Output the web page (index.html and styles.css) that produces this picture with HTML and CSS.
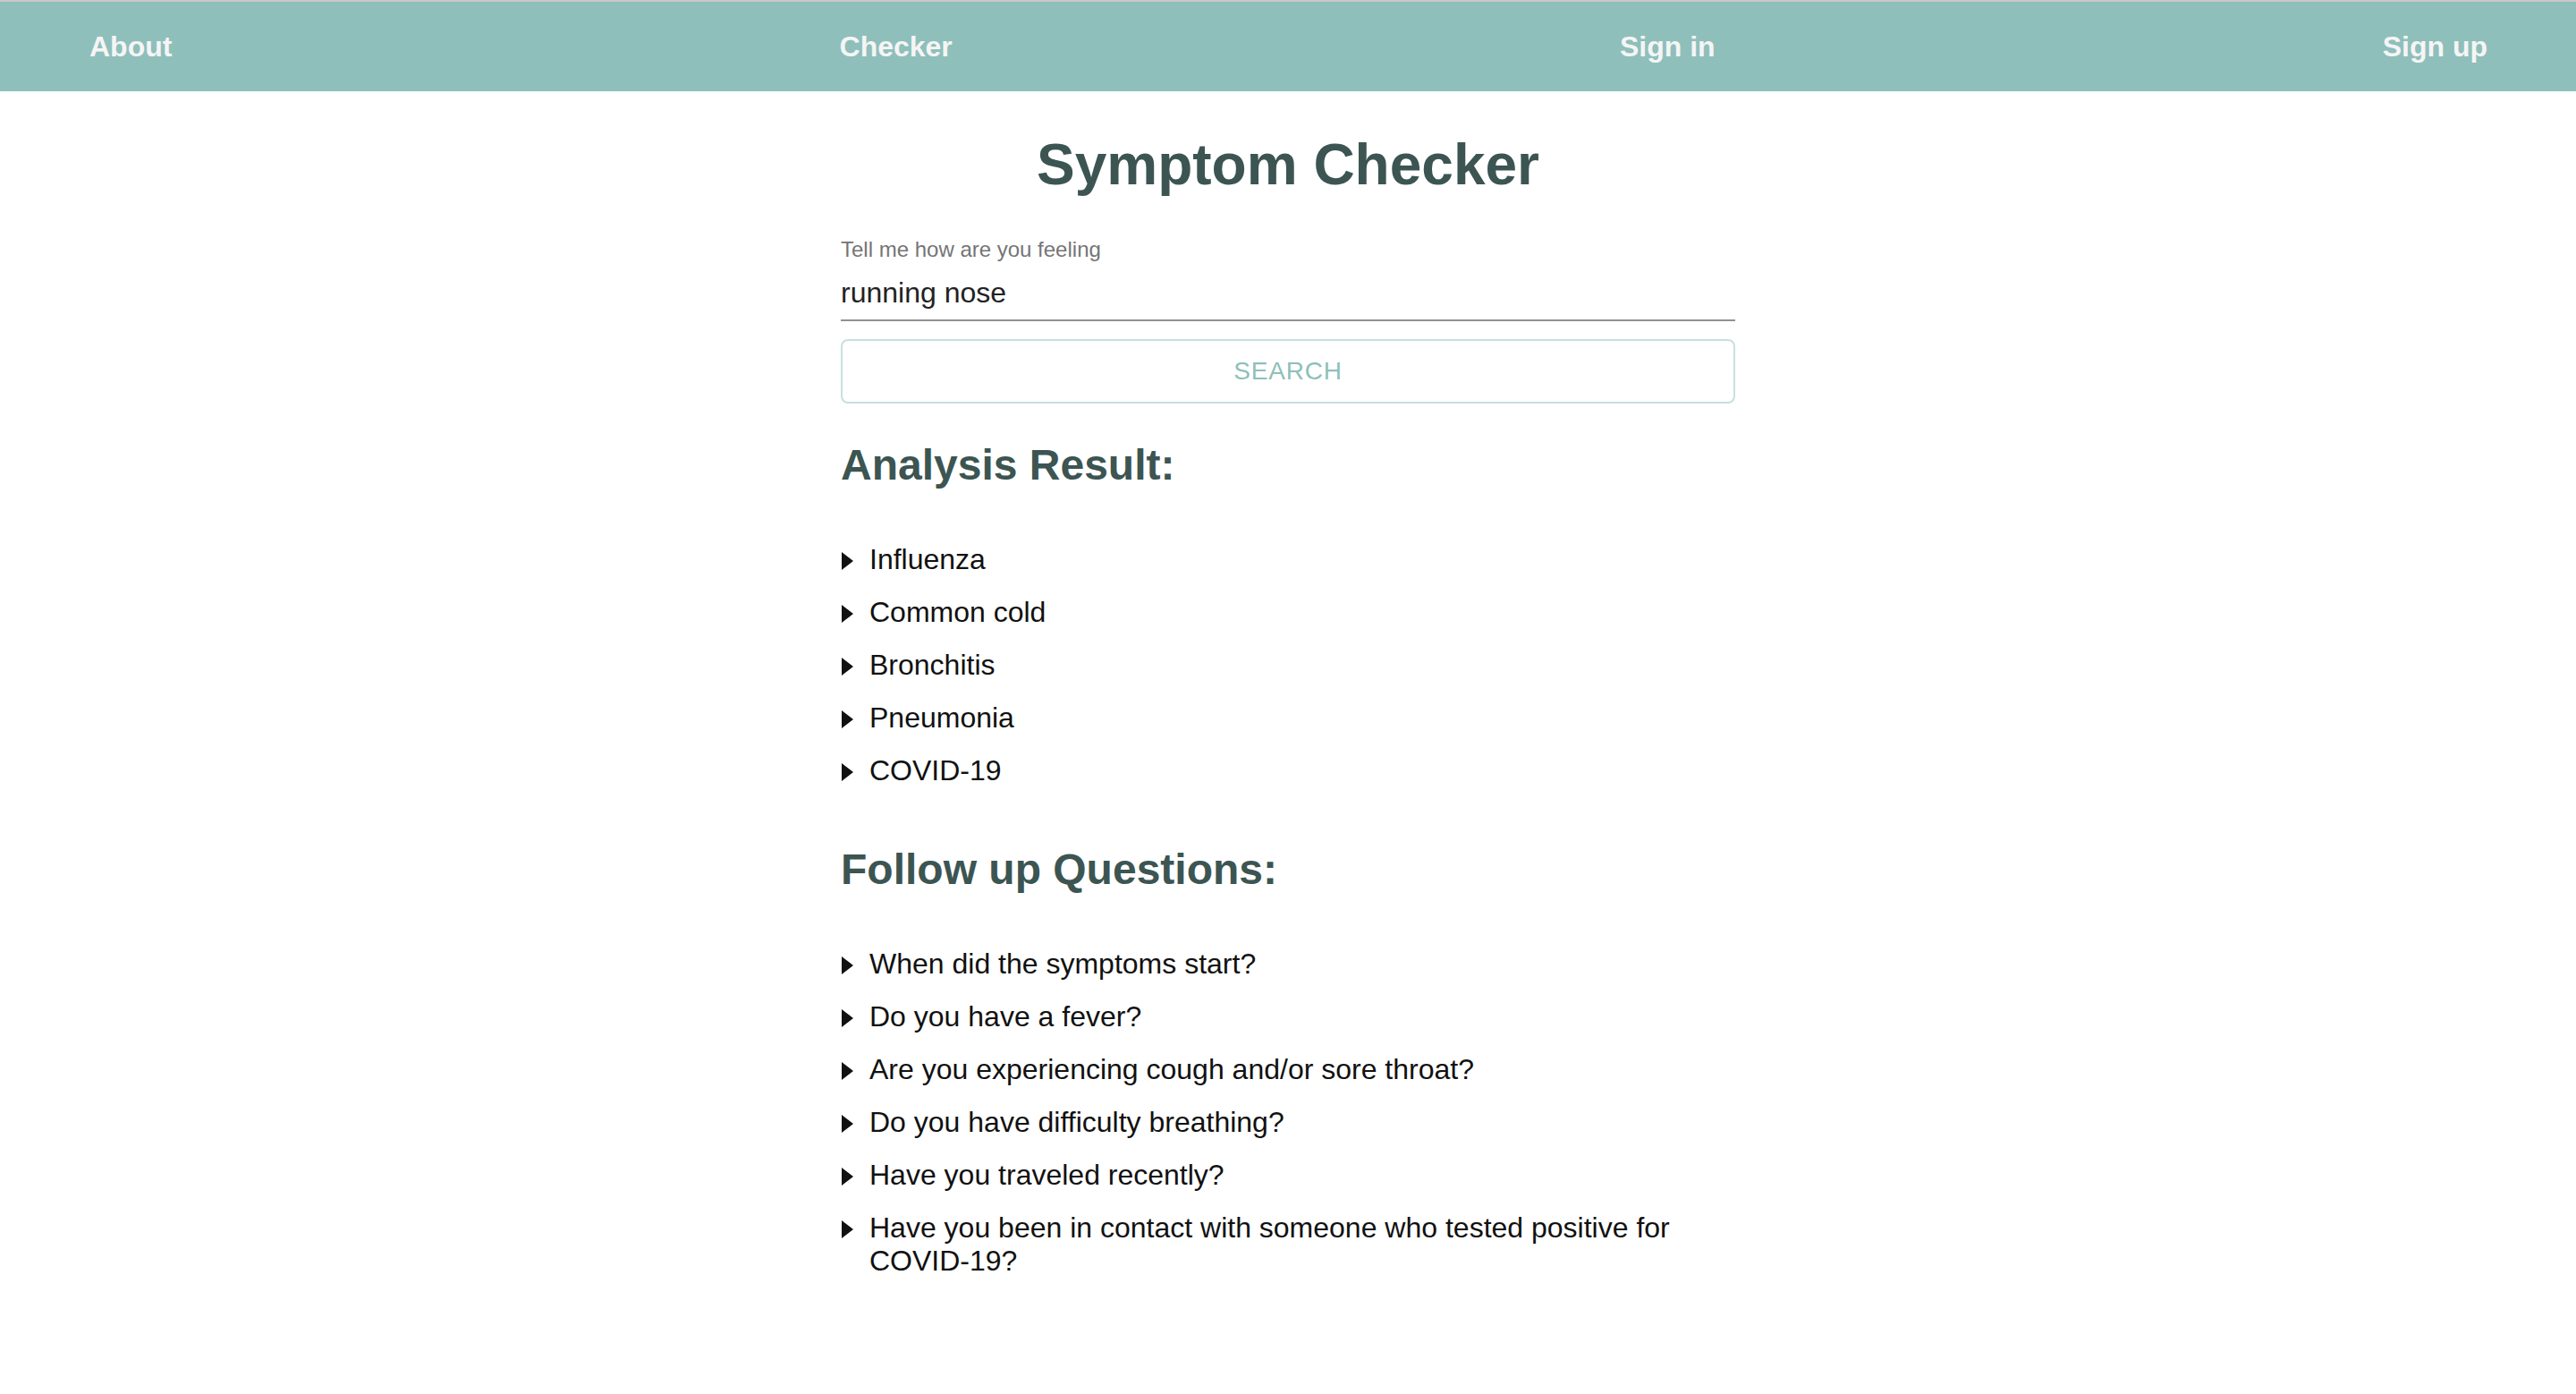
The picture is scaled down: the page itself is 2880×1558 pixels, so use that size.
FILE: index.html
```html
<!DOCTYPE html>
<html lang="en">
<head>
<meta charset="utf-8">
<title>Symptom Checker</title>
<link rel="stylesheet" href="styles.css">
</head>
<body>
<nav class="topnav">
  <a class="nav-link" href="#">About</a>
  <a class="nav-link" href="#">Checker</a>
  <a class="nav-link" href="#">Sign in</a>
  <a class="nav-link" href="#">Sign up</a>
</nav>
<main class="container">
  <h1 class="title">Symptom Checker</h1>
  <div class="field">
    <label class="field-label" for="symptoms">Tell me how are you feeling</label>
    <input class="field-input" id="symptoms" type="text" value="running nose">
  </div>
  <button class="search-btn" type="button">Search</button>

  <section class="section section-first">
    <h2 class="section-title">Analysis Result:</h2>
    <div class="items">
      <details class="item"><summary class="item-summary">Influenza</summary></details>
      <details class="item"><summary class="item-summary">Common cold</summary></details>
      <details class="item"><summary class="item-summary">Bronchitis</summary></details>
      <details class="item"><summary class="item-summary">Pneumonia</summary></details>
      <details class="item"><summary class="item-summary">COVID-19</summary></details>
    </div>
  </section>

  <section class="section section-second">
    <h2 class="section-title">Follow up Questions:</h2>
    <div class="items">
      <details class="item"><summary class="item-summary">When did the symptoms start?</summary></details>
      <details class="item"><summary class="item-summary">Do you have a fever?</summary></details>
      <details class="item"><summary class="item-summary">Are you experiencing cough and/or sore throat?</summary></details>
      <details class="item"><summary class="item-summary">Do you have difficulty breathing?</summary></details>
      <details class="item"><summary class="item-summary">Have you traveled recently?</summary></details>
      <details class="item"><summary class="item-summary">Have you been in contact with someone who tested positive for COVID-19?</summary></details>
    </div>
  </section>
</main>
</body>
</html>
```

FILE: styles.css
```css
* {
  box-sizing: border-box;
}

html, body {
  margin: 0;
  padding: 0;
  background: #ffffff;
}

body {
  font-family: "Liberation Sans", Arial, Helvetica, sans-serif;
  color: #1a1a1a;
}

.topnav {
  display: flex;
  align-items: center;
  justify-content: space-between;
  height: 102px;
  padding: 0 99px 0 100px;
  background: #8fbfbb;
  border-top: 2px solid #c8c8c8;
}

.nav-link {
  font-size: 32px;
  line-height: 37px;
  font-weight: 700;
  color: #f5f5f5;
  text-decoration: none;
}

.container {
  width: 1000px;
  margin: 0 auto;
}

.title {
  margin: 45px 0 44px;
  font-size: 64px;
  line-height: 74px;
  font-weight: 700;
  text-align: center;
  color: #3c5552;
}

.field {
  display: flex;
  flex-direction: column;
}

.field-label {
  font-size: 24px;
  line-height: 28px;
  color: #757575;
  margin-bottom: 16px;
}

.field-input {
  display: block;
  width: 100%;
  height: 50px;
  margin: 0;
  padding: 0 0 11px;
  border: 0;
  border-bottom: 2px solid #919191;
  outline: none;
  background: transparent;
  font-family: inherit;
  font-size: 32px;
  color: #222222;
}

.search-btn {
  display: block;
  width: 100%;
  height: 72px;
  margin-top: 20px;
  padding: 0;
  border: 2px solid #c7e0de;
  border-radius: 8px;
  background: #ffffff;
  color: #8fbfbb;
  font-family: inherit;
  font-size: 28px;
  letter-spacing: 0.8px;
  text-transform: uppercase;
}

.section-first {
  margin-top: 41px;
}

.section-second {
  margin-top: 64px;
}

.section-title {
  margin: 0 0 60px;
  font-size: 48px;
  line-height: 55px;
  font-weight: 700;
  color: #3c5552;
}

.items {
  display: flex;
  flex-direction: column;
  gap: 22px;
}

.item-summary {
  display: flex;
  align-items: flex-start;
  list-style: none;
  font-size: 32px;
  line-height: 37px;
  color: #111111;
  cursor: pointer;
}

.item-summary::-webkit-details-marker {
  display: none;
}

.item-summary::before {
  content: "";
  flex: none;
  width: 0;
  height: 0;
  margin: 10px 18px 0 1px;
  border-left: 13px solid #111111;
  border-top: 10px solid transparent;
  border-bottom: 10px solid transparent;
}
```
